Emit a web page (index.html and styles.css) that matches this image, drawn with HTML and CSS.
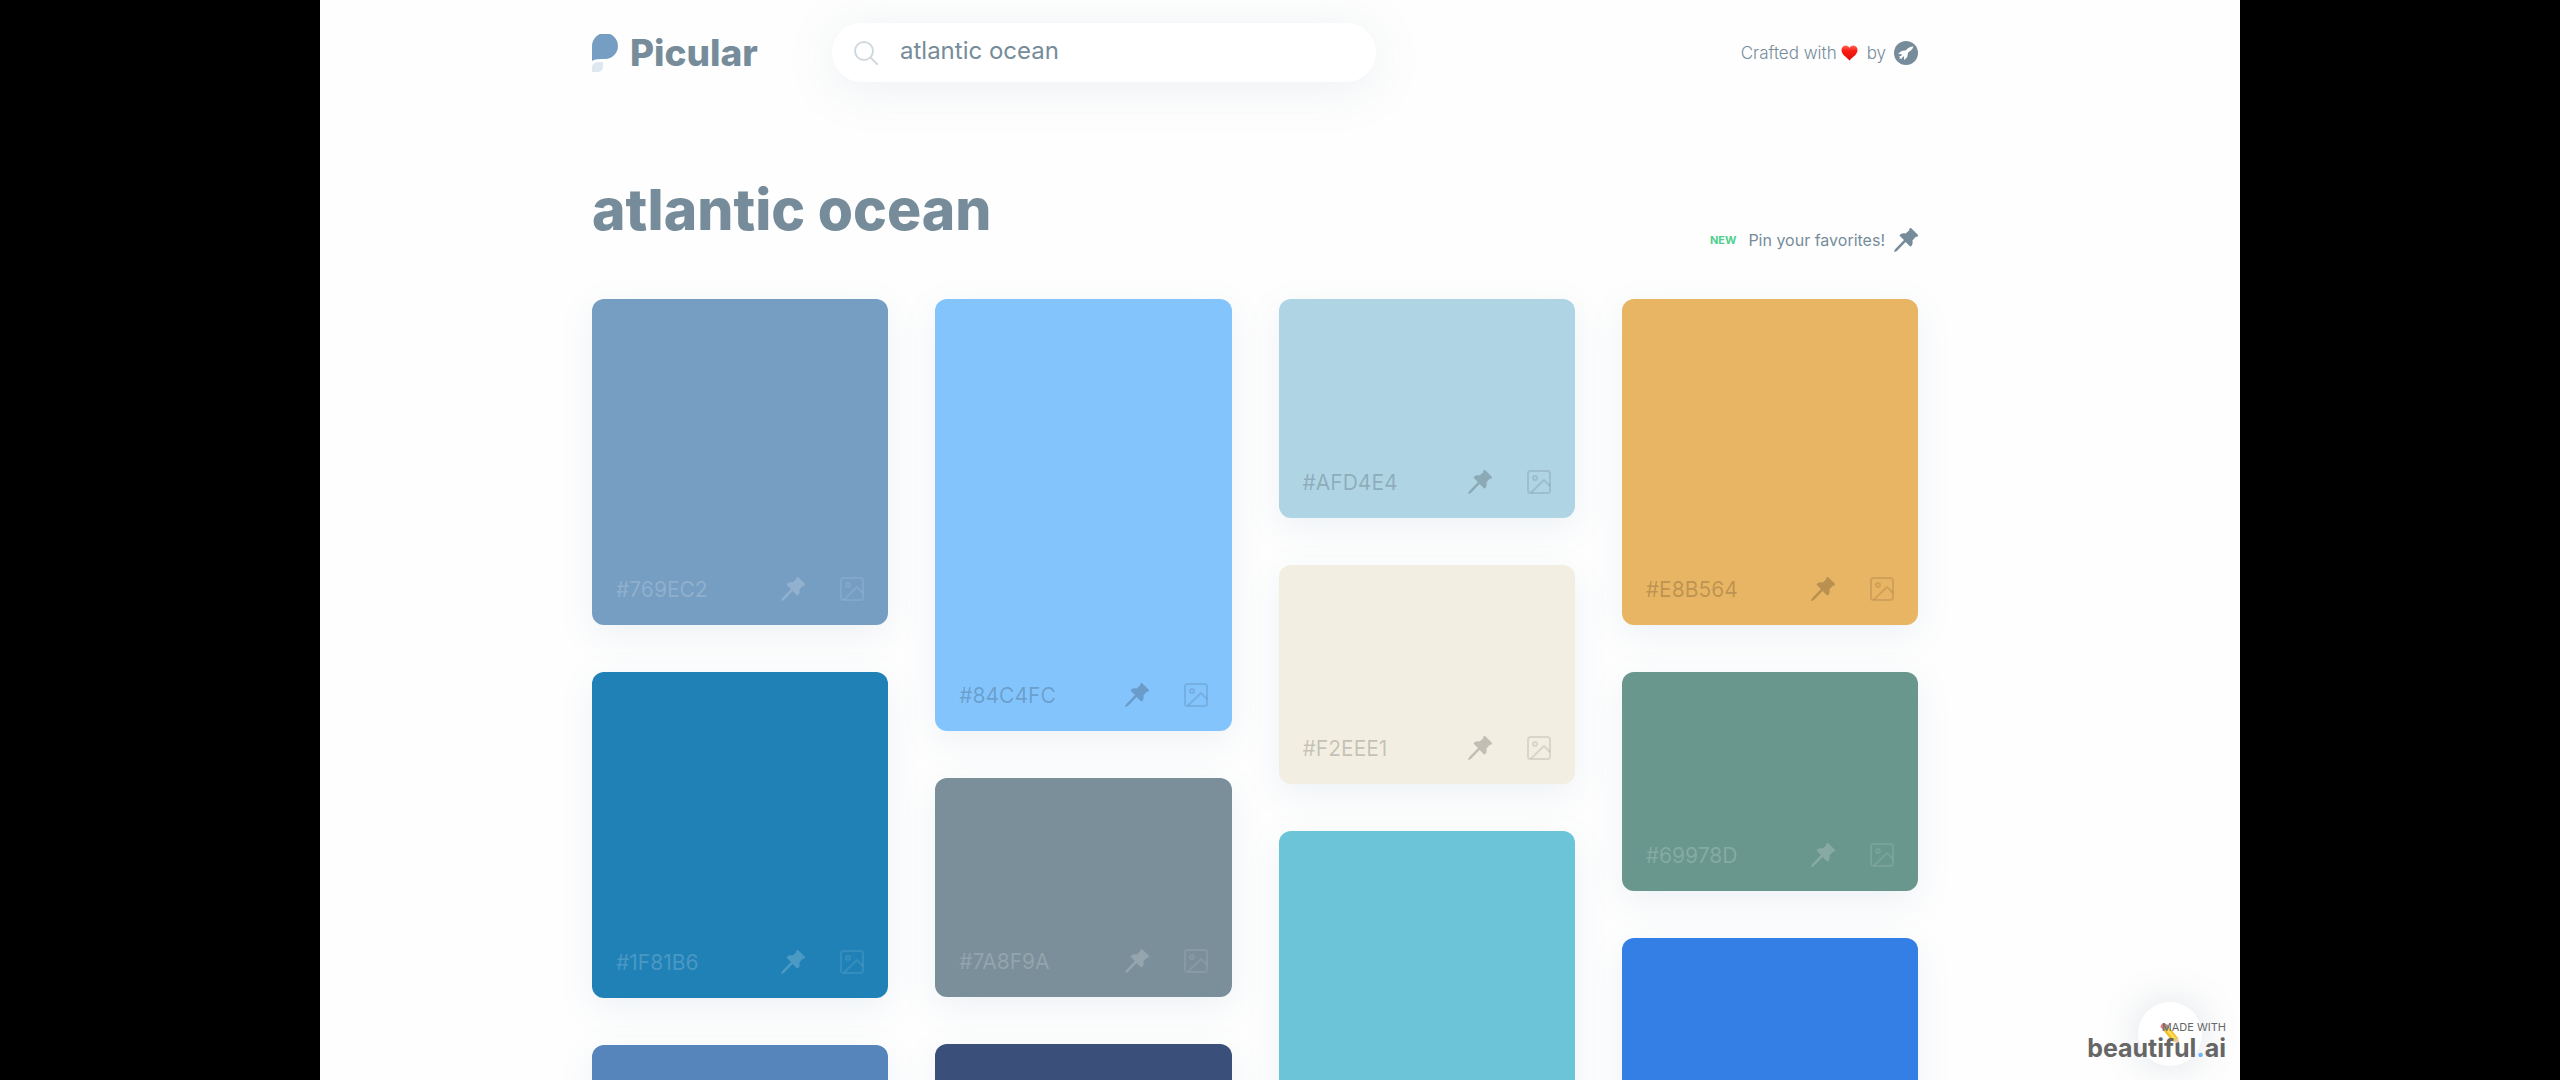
FILE: index.html
```
<!DOCTYPE html>
<html lang="en">
<head>
<meta charset="utf-8">
<title>Picular</title>
<link rel="stylesheet" href="styles.css">
</head>
<body>
<svg class="sprite" aria-hidden="true">
  <symbol id="pin" viewBox="0 0 24 24"><path d="M15.500.6c.5-.6 1.400-.8 2-.2l6.100 6.100c.6.6.5 1.500-.1 2-.5.5-1.100.5-1.700.3L18.400 12.500c.5 1.900.3 3.900-.9 5.400-.5.6-1.300.7-1.900.1l-4-4L2.900 22.900.8 24 0 23.200l1.300-2.200 8.700-8.900-3.900-3.800c-.6-.6-.5-1.400.1-1.900 1.500-1.200 3.500-1.400 5.400-.9l3.700-3.300c-.3-.6-.2-1.200.2-1.600z"/></symbol>
  <symbol id="image" viewBox="0 0 24 24"><g fill="none" stroke="currentColor" stroke-width="2" stroke-linejoin="round"><rect x="1" y="1" width="22" height="22" rx="2.500"/><circle cx="8" cy="8" r="2"/><path d="M4 22.500 17 10l6 6"/></g></symbol>
</svg>
<div class="page">
  <header class="header">
    <a class="logo" href="#">
      <svg class="logo-mark" viewBox="0 0 26 38" aria-hidden="true"><path fill="#769ec2" d="M0 27V13a13 13 0 1 1 13 12C7 25 3 25 0 27z"/><path fill="#dfe8f1" d="M0 38V34c0-4 3-6 6-6h5v4c0 4-2 6-6 6z"/></svg>
      <span>Picular</span>
    </a>
    <form class="search">
      <svg class="search-icon" viewBox="0 0 24 24" aria-hidden="true"><g fill="none" stroke="#d1d9de" stroke-width="2" stroke-linecap="round"><circle cx="10" cy="10" r="9"/><path d="m17 17 6 6"/></g></svg>
      <input class="search-input" type="text" aria-label="Search" value="atlantic ocean">
    </form>
    <p class="credit">
      <span>Crafted with</span>
      <svg class="heart" viewBox="0 0 16 16" aria-hidden="true"><defs><linearGradient id="hg" x1="0" y1="0" x2="0" y2="1"><stop offset="0" stop-color="#ff6a58"/><stop offset=".35" stop-color="#fa1c12"/><stop offset="1" stop-color="#e00d08"/></linearGradient></defs><path fill="url(#hg)" d="M8 15.500C5 12 0 9.500 0 5 0 2 2 .5 4.300.5 6 .5 7.500 1.500 8 3 8.500 1.500 10 .5 11.700.5 14 .5 16 2 16 5c0 4.500-5 7-8 10.500z"/></svg>
      <span class="by">by</span>
      <a class="rocket" href="#" aria-label="Rocket"><svg viewBox="0 0 24 24" aria-hidden="true"><circle cx="12" cy="12" r="12" fill="#768c9a"/><path fill="#fff" d="M18.500 5.500c-3 .3-4.800 1.700-6.500 3.700l-4.500.8L4 13l4 .2-.7 1.500-2.300.8 1 .8-1 1.700 1.900-.8.700 1.100.9-2.200 1.500-.8.2 4 3-3.300.9-4.500c2.500-1.600 4.500-3 5.300-6z"/></svg></a>
    </p>
  </header>
  <main>
    <div class="title-row">
      <h1 class="title">atlantic ocean</h1>
      <a class="favorites" href="#"><span class="new">NEW</span><span>Pin your favorites!</span><svg class="icon" aria-hidden="true"><use href="#pin"/></svg></a>
    </div>
    <div class="columns">
      <div class="column">
        <article class="card medium light c-769ec2"><span class="hex">#769EC2</span><button class="act" aria-label="Pin"><svg class="icon"><use href="#pin"/></svg></button><button class="act faint" aria-label="Image"><svg class="icon"><use href="#image"/></svg></button></article>
        <article class="card medium light c-1f81b6"><span class="hex">#1F81B6</span><button class="act" aria-label="Pin"><svg class="icon"><use href="#pin"/></svg></button><button class="act faint" aria-label="Image"><svg class="icon"><use href="#image"/></svg></button></article>
        <article class="card medium c-5685bb"></article>
      </div>
      <div class="column">
        <article class="card tall c-84c4fc"><span class="hex">#84C4FC</span><button class="act" aria-label="Pin"><svg class="icon"><use href="#pin"/></svg></button><button class="act faint" aria-label="Image"><svg class="icon"><use href="#image"/></svg></button></article>
        <article class="card short light c-7a8f9a"><span class="hex">#7A8F9A</span><button class="act" aria-label="Pin"><svg class="icon"><use href="#pin"/></svg></button><button class="act faint" aria-label="Image"><svg class="icon"><use href="#image"/></svg></button></article>
        <article class="card medium c-3a507b"></article>
      </div>
      <div class="column">
        <article class="card short c-afd4e4"><span class="hex">#AFD4E4</span><button class="act" aria-label="Pin"><svg class="icon"><use href="#pin"/></svg></button><button class="act faint" aria-label="Image"><svg class="icon"><use href="#image"/></svg></button></article>
        <article class="card short c-f2eee1"><span class="hex">#F2EEE1</span><button class="act" aria-label="Pin"><svg class="icon"><use href="#pin"/></svg></button><button class="act faint" aria-label="Image"><svg class="icon"><use href="#image"/></svg></button></article>
        <article class="card tall c-6cc4d9"></article>
      </div>
      <div class="column">
        <article class="card medium c-e8b564"><span class="hex">#E8B564</span><button class="act" aria-label="Pin"><svg class="icon"><use href="#pin"/></svg></button><button class="act faint" aria-label="Image"><svg class="icon"><use href="#image"/></svg></button></article>
        <article class="card short light c-69978d"><span class="hex">#69978D</span><button class="act" aria-label="Pin"><svg class="icon"><use href="#pin"/></svg></button><button class="act faint" aria-label="Image"><svg class="icon"><use href="#image"/></svg></button></article>
        <article class="card medium c-337fe6"></article>
      </div>
    </div>
  </main>
  <button class="edit" aria-label="Edit"><svg viewBox="0 0 20 22" aria-hidden="true"><path fill="#f3bd22" d="M3 7 8 3l10 12-5 4z"/><path fill="#ffdc55" d="M5 6 7 4l9 11-2 2z"/><path fill="#8f979b" d="m2 5 5-4 2 3-5 4z"/><path fill="#e8837f" d="M1 5C-1 2 4-1 6 1l1 2-4 3z"/><path fill="#ecc79c" d="m13 18 5-4 1 7z"/><path fill="#444" d="m17 20 2-1v3z"/></svg></button>
  <a class="badge" href="#"><span class="made">MADE WITH</span><span class="brand">beautiful<span class="dot">.</span>ai</span></a>
</div>
</body>
</html>
```
FILE: styles.css
```
* { box-sizing: border-box; }

body {
  margin: 0;
  background: #000;
  color: #768c9a;
  font-family: Inter, "Open Sans", sans-serif;
}

a { color: inherit; text-decoration: none; }
button { border: 0; padding: 0; background: none; color: inherit; cursor: pointer; }
svg { display: block; }
.sprite { display: none; }
.icon { width: 24px; height: 24px; fill: currentColor; }

.page {
  position: relative;
  width: 75%;
  height: 100vh;
  margin: 0 auto;
  padding: 23px 322px 0 272px;
  overflow: hidden;
  background: #fefefe;
}

/* Header */
.header { display: flex; align-items: center; }
.logo {
  display: flex;
  align-items: center;
  gap: 12px;
  width: 240px;
  font-size: 37px;
  line-height: 40px;
  font-weight: 800;
}
.logo-mark { width: 26px; height: 38px; }

.search {
  display: flex;
  align-items: center;
  gap: 22px;
  width: 41%;
  height: 59px;
  padding: 0 22px;
  border-radius: 30px;
  background: #fff;
  box-shadow: 0 6px 50px rgba(118, 140, 154, 0.13);
}
.search-icon { flex: none; width: 24px; height: 24px; }
.search-input {
  flex: 1;
  min-width: 0;
  padding: 0 0 3px;
  border: 0;
  outline: 0;
  background: none;
  color: inherit;
  font: 400 24px/32px Inter, "Open Sans", sans-serif;
}

.credit {
  display: flex;
  align-items: center;
  margin: 0 0 0 auto;
  font-size: 17px;
  line-height: 20px;
  font-weight: 300;
}
.heart { width: 17px; height: 16px; margin: 0 9px 0 4px; }
.rocket { width: 24px; margin-left: 8px; }

/* Title */
.title-row {
  display: flex;
  align-items: flex-end;
  justify-content: space-between;
  margin-top: 96px;
}
.title { margin: 0 0 10px; font-size: 57px; line-height: 64px; font-weight: 800; }
.favorites { display: flex; align-items: center; font-size: 16px; line-height: 24px; }
.new { margin-right: 12px; color: #4fcf8d; font-size: 11px; font-weight: 700; }
.favorites .icon { margin-left: 9px; }

/* Swatches */
.columns {
  display: grid;
  grid-template-columns: repeat(4, 1fr);
  gap: 47px;
  margin-top: 47px;
}
.column { display: flex; flex-direction: column; gap: 47px; }
.card {
  display: flex;
  align-items: flex-end;
  padding: 24px;
  border-radius: 12px;
  color: rgba(0, 0, 0, 0.2);
  box-shadow: 0 10px 35px rgba(90, 125, 165, 0.1);
}
.card.light { color: rgba(255, 255, 255, 0.2); }
.short { height: 219px; }
.medium { height: 326px; }
.tall { height: 432px; }
.hex { margin-right: auto; font-size: 21px; line-height: 22px; }
.act { margin-left: 35px; }
.faint { opacity: 0.5; }

.c-769ec2 { background: #769ec2; }
.c-1f81b6 { background: #1f81b6; }
.c-5685bb { background: #5685bb; }
.c-84c4fc { background: #84c4fc; }
.c-7a8f9a { background: #7a8f9a; }
.c-3a507b { background: #3a507b; }
.c-afd4e4 { background: #afd4e4; }
.c-f2eee1 { background: #f2eee1; }
.c-6cc4d9 { background: #6cc4d9; }
.c-e8b564 { background: #e8b564; }
.c-69978d { background: #69978d; }
.c-337fe6 { background: #337fe6; }

/* Floating controls over the page */
.edit {
  position: absolute;
  right: 38px;
  bottom: 14px;
  display: grid;
  place-items: center;
  width: 64px;
  height: 64px;
  border-radius: 50%;
  background: #fff;
  box-shadow: 0 0 40px rgba(90, 110, 130, 0.2);
}
.edit svg { width: 20px; height: 22px; }
.badge {
  position: absolute;
  right: 14px;
  bottom: 18px;
  display: flex;
  flex-direction: column;
  align-items: flex-end;
  color: #666;
}
.made { font-size: 11px; line-height: 14px; }
.brand { font-size: 25px; line-height: 28px; font-weight: 700; }
.dot { color: #6cb4f8; }
```
